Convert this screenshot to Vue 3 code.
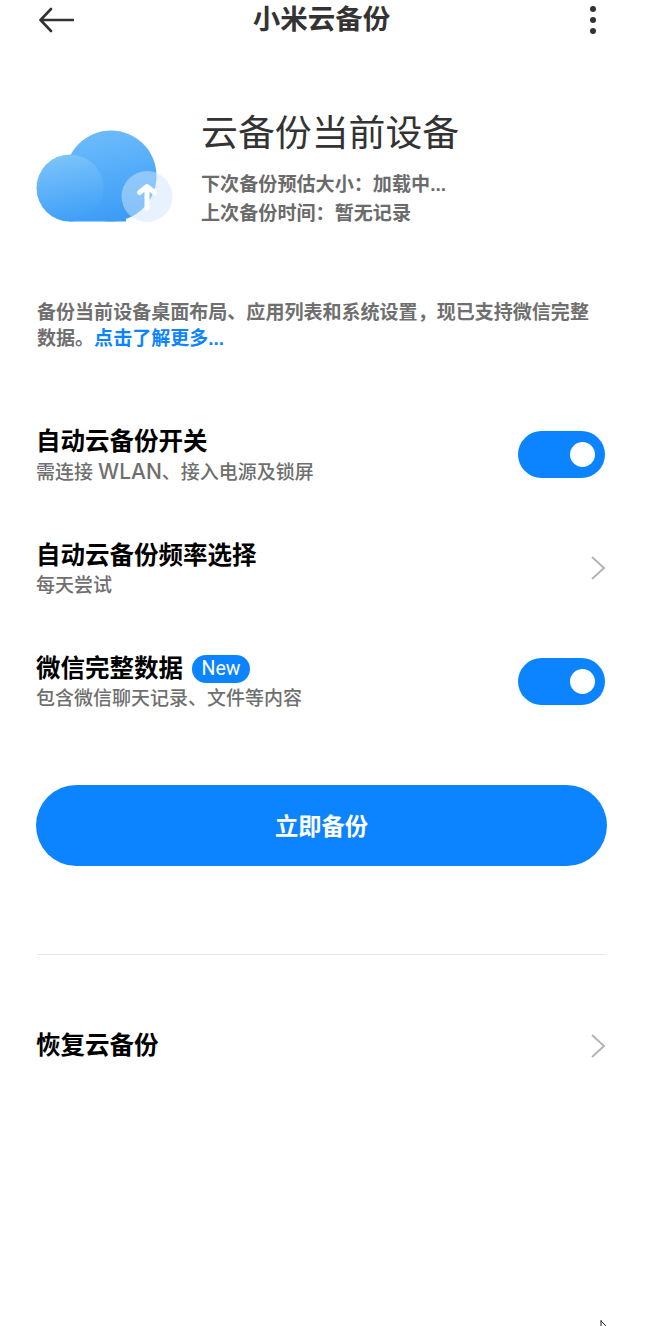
<template>
  <div class="page">
    <!-- top bar -->
    <div class="topbar">
      <svg class="back" width="36" height="26" viewBox="0 0 36 26">
        <path d="M13 2 L2.5 13 L13 24 M3 13 H35" fill="none" stroke="#333" stroke-width="2.6" stroke-linecap="round" stroke-linejoin="round" />
      </svg>
      <div class="title">小米云备份</div>
      <div class="more"><span></span><span></span><span></span></div>
    </div>

    <!-- header -->
    <div class="hero">
      <svg class="cloud" width="140" height="96" viewBox="0 0 140 96">
        <defs>
          <linearGradient id="bigc" gradientUnits="userSpaceOnUse" x1="60" y1="3" x2="80" y2="95">
            <stop offset="0" stop-color="#6dbcfb" />
            <stop offset="1" stop-color="#3a9cf6" />
          </linearGradient>
          <linearGradient id="smallc" gradientUnits="userSpaceOnUse" x1="25" y1="28" x2="38" y2="95">
            <stop offset="0" stop-color="#7cc3fb" />
            <stop offset="1" stop-color="#3d9ff7" />
          </linearGradient>
        </defs>
        <circle cx="75" cy="49" r="45.5" fill="url(#bigc)" />
        <path d="M33 61 H90 V94.5 H33 Z" fill="url(#bigc)" />
        <circle cx="34" cy="61" r="33.5" fill="url(#smallc)" />
        <circle cx="111" cy="69.5" r="25.5" fill="#cfe6fd" fill-opacity="0.5" />
        <path d="M111 81 V60 M103.5 65.5 L111 59.5 L118.5 65.5" fill="none" stroke="#fff" stroke-width="5" stroke-linecap="round" stroke-linejoin="round" />
      </svg>
      <div class="hero-text">
        <div class="hero-title">云备份当前设备</div>
        <div class="hero-line first">下次备份预估大小：加载中...</div>
        <div class="hero-line">上次备份时间：暂无记录</div>
      </div>
    </div>

    <p class="desc">备份当前设备桌面布局、应用列表和系统设置，现已支持微信完整数据。<span class="link">点击了解更多...</span></p>

    <!-- settings -->
    <div class="rows">
      <div v-for="row in rows" :key="row.title" class="row">
        <div class="row-text">
          <div class="row-title">
            {{ row.title }}
            <span v-if="row.isNew" class="badge">New</span>
          </div>
          <div class="row-sub">{{ row.subStart }}<span v-if="row.latin" class="latin">{{ row.latin }}</span>{{ row.sub }}</div>
        </div>
        <div v-if="row.toggle" class="switch"><span></span></div>
        <svg v-else class="chev" width="16" height="26" viewBox="0 0 16 26">
          <path d="M2 2 L14 13 L2 24" fill="none" stroke="#b4b4b4" stroke-width="2" />
        </svg>
      </div>
    </div>

    <button class="backup">立即备份</button>

    <div class="divider"></div>

    <div class="restore">
      <div class="row-title">恢复云备份</div>
      <svg class="chev" width="16" height="26" viewBox="0 0 16 26">
        <path d="M2 2 L14 13 L2 24" fill="none" stroke="#b4b4b4" stroke-width="2" />
      </svg>
    </div>

    <!-- mouse pointer left in the capture -->
    <svg class="pointer" width="7" height="6" viewBox="0 0 7 6">
      <path d="M1 0 V6 M1 1 L6 6" fill="none" stroke="#222" stroke-width="1" />
    </svg>
  </div>
</template>

<script setup>
const rows = [
  { title: '自动云备份开关', subStart: '需连接 ', latin: 'WLAN', sub: '、接入电源及锁屏', toggle: true },
  { title: '自动云备份频率选择', sub: '每天尝试', toggle: false },
  { title: '微信完整数据', sub: '包含微信聊天记录、文件等内容', toggle: true, isNew: true }
]
</script>

<style>
html, body {
  background: #fff;
}
</style>

<style scoped>
.page {
  position: relative;
  width: 646px;
  height: 1326px;
  overflow: hidden;
  box-sizing: border-box;
  padding: 0 39px 0 36px;
  font-family: "Liberation Sans", "Noto Sans CJK SC", sans-serif;
  background: #fff;
}

.topbar {
  display: grid;
  grid-template-columns: 1fr auto 1fr;
  align-items: center;
  height: 40px;
  margin-left: 2px;
  margin-right: 11px;
}

.title {
  font-size: 27.5px;
  line-height: 38px;
  font-weight: 700;
  color: #333;
  margin-left: 9px;
}

.more {
  justify-self: end;
  display: flex;
  flex-direction: column;
  gap: 5px;
}

.more span {
  width: 6px;
  height: 6px;
  border-radius: 50%;
  background: #333;
}

.hero {
  display: flex;
  margin-top: 69px;
}

.cloud {
  flex: none;
  margin-top: 18px;
}

.hero-text {
  margin-left: 25px;
}

.hero-title {
  font-size: 36.9px;
  line-height: 50px;
  color: #333;
}

.hero-line {
  font-size: 19.1px;
  font-weight: 700;
  line-height: 28px;
  color: #6b6b6b;
  margin-top: 1px;
}

.hero-line.first {
  margin-top: 12px;
}

.desc {
  margin: 72px 1px 0;
  font-size: 19.05px;
  font-weight: 700;
  line-height: 26px;
  color: #6f6f6f;
}

.link {
  color: #0d84ff;
}

.rows {
  margin-top: 46px;
}

.row {
  display: flex;
  align-items: center;
  justify-content: space-between;
  height: 113.3px;
}

.row-text {
  display: flex;
  flex-direction: column;
  padding-top: 2px;
}

.row-title {
  display: flex;
  align-items: center;
  font-size: 24.5px;
  font-weight: 700;
  line-height: 33px;
  color: #000;
}

.row-sub {
  font-family: "Inter", "Noto Sans CJK SC", sans-serif;
  font-size: 19px;
  line-height: 26px;
  margin-top: 1px;
  font-weight: 500;
  color: #6f6f6f;
}

.latin {
  font-size: 21px;
}

.badge {
  margin-left: 9px;
  width: 58px;
  height: 28px;
  border-radius: 14px;
  background: #0d84ff;
  color: #fff;
  font-size: 19.5px;
  font-weight: 400;
  line-height: 28px;
  text-align: center;
  font-family: "Roboto", "Liberation Sans", sans-serif;
}

.switch {
  width: 87px;
  height: 47px;
  margin-right: 2px;
  border-radius: 24px;
  background: #0d84ff;
  display: flex;
  align-items: center;
  justify-content: flex-end;
  padding-right: 10px;
  box-sizing: border-box;
}

.switch span {
  width: 25px;
  height: 25px;
  border-radius: 50%;
  background: #fff;
}

.chev {
  flex: none;
  margin-right: 1px;
}

.backup {
  display: block;
  width: 571px;
  height: 81px;
  margin-top: 47px;
  border: none;
  border-radius: 41px;
  background: #0d84ff;
  color: #fff;
  font-family: inherit;
  font-size: 23.3px;
  font-weight: 700;
}

.divider {
  height: 1px;
  margin: 88px 1px 0 1px;
  background: #e6e6e6;
}

.restore {
  display: flex;
  align-items: center;
  justify-content: space-between;
  margin-top: 73px;
  height: 36px;
}

.pointer {
  position: absolute;
  left: 600px;
  top: 1320px;
}
</style>
